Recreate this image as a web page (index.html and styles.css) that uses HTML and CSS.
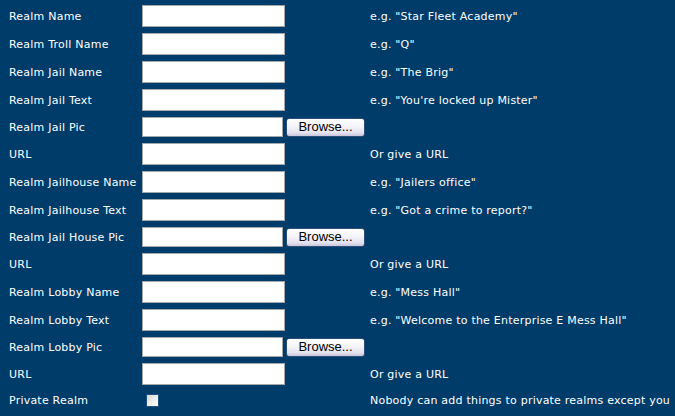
FILE: index.html
```html
<!DOCTYPE html>
<html>
<head>
<meta charset="utf-8">
<link rel="stylesheet" href="styles.css">
</head>
<body>
<div class="form">
  <div class="row"><span class="label">Realm Name</span><span class="field"><span class="text-in"></span></span><span class="hint">e.g. "Star Fleet Academy"</span></div>
  <div class="row"><span class="label">Realm Troll Name</span><span class="field"><span class="text-in"></span></span><span class="hint">e.g. "Q"</span></div>
  <div class="row"><span class="label">Realm Jail Name</span><span class="field"><span class="text-in"></span></span><span class="hint">e.g. "The Brig"</span></div>
  <div class="row"><span class="label">Realm Jail Text</span><span class="field"><span class="text-in"></span></span><span class="hint">e.g. "You're locked up Mister"</span></div>
  <div class="row file"><span class="label">Realm Jail Pic</span><span class="field"><span class="file-in"></span><button class="browse" type="button">Browse...</button></span><span class="hint"></span></div>
  <div class="row"><span class="label">URL</span><span class="field"><span class="text-in"></span></span><span class="hint">Or give a URL</span></div>
  <div class="row"><span class="label">Realm Jailhouse Name</span><span class="field"><span class="text-in"></span></span><span class="hint">e.g. "Jailers office"</span></div>
  <div class="row"><span class="label">Realm Jailhouse Text</span><span class="field"><span class="text-in"></span></span><span class="hint">e.g. "Got a crime to report?"</span></div>
  <div class="row file"><span class="label">Realm Jail House Pic</span><span class="field"><span class="file-in"></span><button class="browse" type="button">Browse...</button></span><span class="hint"></span></div>
  <div class="row"><span class="label">URL</span><span class="field"><span class="text-in"></span></span><span class="hint">Or give a URL</span></div>
  <div class="row"><span class="label">Realm Lobby Name</span><span class="field"><span class="text-in"></span></span><span class="hint">e.g. "Mess Hall"</span></div>
  <div class="row"><span class="label">Realm Lobby Text</span><span class="field"><span class="text-in"></span></span><span class="hint">e.g. "Welcome to the Enterprise E Mess Hall"</span></div>
  <div class="row file"><span class="label">Realm Lobby Pic</span><span class="field"><span class="file-in"></span><button class="browse" type="button">Browse...</button></span><span class="hint"></span></div>
  <div class="row"><span class="label">URL</span><span class="field"><span class="text-in"></span></span><span class="hint">Or give a URL</span></div>
  <div class="row check"><span class="label">Private Realm</span><span class="field"><span class="checkbox"></span></span><span class="hint">Nobody can add things to private realms except you</span></div>
</div>
</body>
</html>
```
FILE: styles.css
```css
html, body {
  margin: 0;
  padding: 0;
  background: #003c6a;
}
body {
  font-family: "DejaVu Sans", Verdana, sans-serif;
  font-size: 11px;
  letter-spacing: 0.22px;
  color: #ffffff;
  width: 675px;
  height: 416px;
  overflow: hidden;
}
.form {
  padding: 2px 0 0 9px;
  display: flex;
  flex-direction: column;
}
.row {
  display: flex;
  align-items: center;
  height: 28px;
}
.row.file { height: 26px; }
.row.check { height: 24px; }
.label {
  width: 133px;
  flex: none;
  white-space: nowrap;
}
.field {
  width: 228px;
  flex: none;
  display: flex;
  align-items: center;
}
.hint {
  white-space: nowrap;
}
.text-in {
  display: block;
  box-sizing: border-box;
  width: 143px;
  height: 22px;
  background: #ffffff;
  border: 1px solid #a3a8ad;
}
.file-in {
  display: block;
  box-sizing: border-box;
  width: 141px;
  height: 20px;
  background: #ffffff;
  border: 1px solid #a3a8ad;
}
.browse {
  box-sizing: border-box;
  margin: 0 0 0 3px;
  width: 79px;
  height: 19px;
  padding: 0 0 1px;
  border: 1px solid #2b4f78;
  border-radius: 3px;
  background: linear-gradient(to bottom, #ffffff 0%, #f4f3f8 45%, #e4e2ee 80%, #c9c6dc 100%);
  font-family: "Liberation Sans", Arial, sans-serif;
  font-size: 13px;
  letter-spacing: 0;
  color: #000000;
  line-height: 16px;
  text-align: center;
}
.checkbox {
  display: block;
  box-sizing: border-box;
  width: 13px;
  height: 13px;
  margin-left: 4px;
  border: 1px solid #1d5282;
  background: linear-gradient(135deg, #d8d8d2 0%, #eeeeea 50%, #ffffff 100%);
}
```
